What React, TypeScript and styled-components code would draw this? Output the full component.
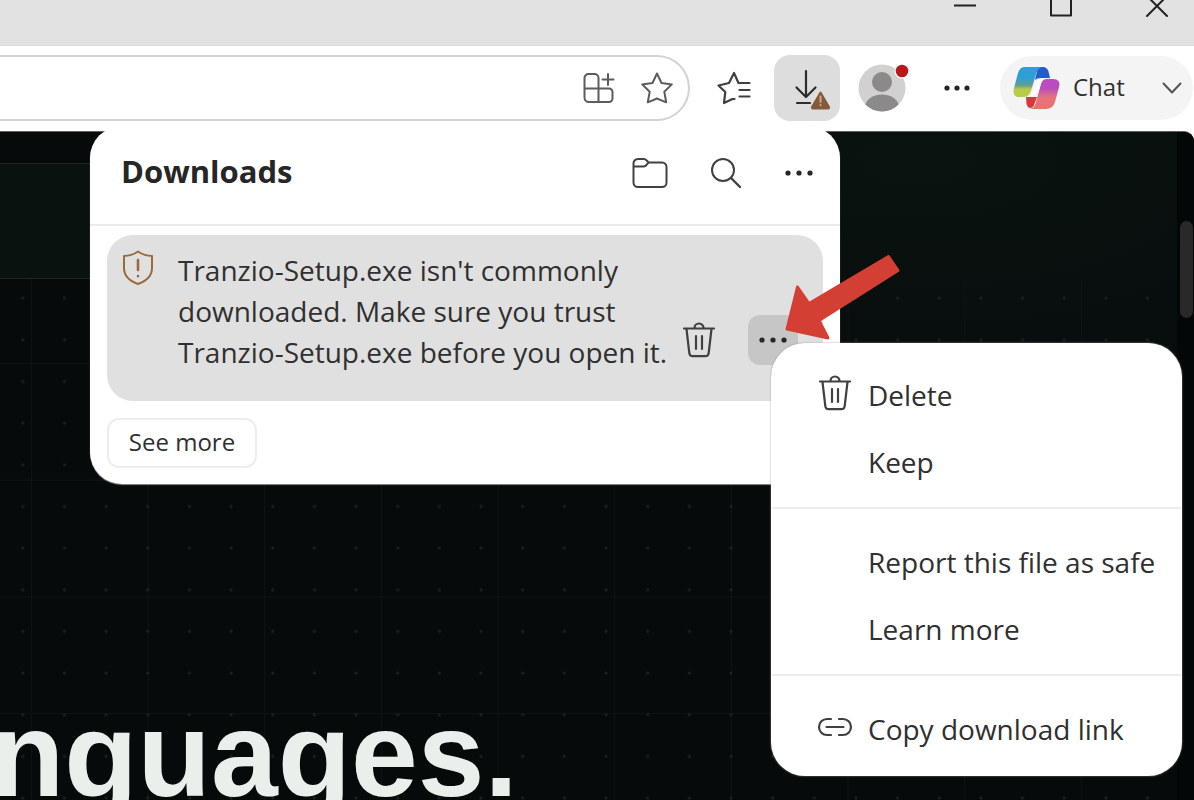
import React from 'react';
import styled, { createGlobalStyle } from 'styled-components';

const GlobalStyle = createGlobalStyle`
  * { box-sizing: border-box; }
  html, body { margin: 0; height: 100%; overflow: hidden; }
  body { font-family: "Open Sans", "Noto Sans", sans-serif; color: #303030; background: #ffffff; }
  button { font: inherit; color: inherit; background: none; border: 0; padding: 0; }
  svg { display: block; flex: none; overflow: visible; }
`;

const Window = styled.div`
  position: relative;
  display: flex;
  flex-direction: column;
  height: 100vh;
  overflow: hidden;
`;

const TitleBar = styled.header`
  display: flex;
  flex: none;
  justify-content: flex-end;
  height: 46px;
  padding-right: 13px;
  background: #e2e2e2;
  border-bottom: 1px solid #dadada;
`;

const CaptionButton = styled.button`
  display: flex;
  justify-content: center;
  width: 48px;
  height: 18px;
  & + & { margin-left: 48px; }
`;

const Toolbar = styled.div`
  display: flex;
  flex: none;
  align-items: center;
  height: 85px;
  padding-bottom: 2px;
  background: #ffffff;
`;

const AddressBar = styled.div`
  position: relative;
  display: flex;
  flex: 1;
  align-items: center;
  gap: 24px;
  height: 66px;
  padding-right: 14px;
  border: 2px solid #d2d3d3;
  border-left: 0;
  border-radius: 0 33px 33px 0;
`;

const AddressInput = styled.input`
  flex: 1;
  min-width: 0;
  height: 40px;
  border: 0;
  outline: 0;
  background: transparent;
  font: inherit;
`;

const ToolButton = styled.button<{ $active?: boolean; $width?: number }>`
  position: relative;
  display: flex;
  align-items: center;
  justify-content: center;
  width: ${(p) => p.$width ?? 66}px;
  height: 66px;
  border-radius: 16px;
  background: ${(p) => (p.$active ? '#dddddd' : 'transparent')};
`;

const PlainIconButton = styled.button`
  display: flex;
  align-items: center;
  justify-content: center;
`;

const ToolGroup = styled.div`
  display: flex;
  flex: none;
  align-items: center;
  padding-left: 4px;
`;

const ChatButton = styled.button`
  display: flex;
  align-items: center;
  width: 193px;
  height: 64px;
  margin-left: 10px;
  margin-right: 1px;
  padding: 0 11px 0 12px;
  border-radius: 32px;
  background: #f4f4f4;
  font-size: 24px;
  line-height: 32px;
`;

const ChatLabel = styled.span`
  flex: 1;
  padding: 0 0 2px 13px;
  text-align: left;
`;

const Viewport = styled.main`
  position: relative;
  display: flex;
  flex: 1;
  min-height: 0;
  border-top: 1px solid #5c6161;
  border-top-right-radius: 10px;
  background: #060a0b;
  overflow: hidden;
`;

const Page = styled.div`
  flex: 1;
  min-width: 0;
  padding-top: 31px;
  background: radial-gradient(ellipse 600px 260px at 78% 4%, #09130f, #080d0d 80%, #060a0b);
`;

const SiteHeader = styled.div`
  width: 70%;
  height: 116px;
  border: solid #222524;
  border-width: 1px 0;
  background: #0a120f;
`;

const Hero = styled.section`
  height: 600px;
  padding-top: 405px;
  background-image:
    radial-gradient(circle, #1b2120 1px, transparent 2px),
    linear-gradient(to right, #0d1312 1px, transparent 1px),
    linear-gradient(#0d1312 1px, transparent 1px);
  background-size:
    calc(125px / 3) calc(125px / 3),
    calc(350px / 3) 100%,
    100% calc(350px / 3);
  background-position: 2px 40px, 31px 0, 0 84px;
`;

const HeroTitle = styled.h1`
  margin: 0 0 0 -9px;
  font-family: "Liberation Sans", Arial, sans-serif;
  font-size: 120px;
  line-height: 140px;
  font-weight: 700;
  color: #ebefec;
`;

const ScrollTrack = styled.div`
  flex: none;
  width: 17px;
  padding: 89px 1px 0 3px;
  background: #030707;
`;

const ScrollThumb = styled.div`
  height: 97px;
  border-radius: 7px;
  background: #2a2828;
`;

const DownloadsPanel = styled.section`
  position: absolute;
  top: 126px;
  right: 354px;
  width: 750px;
  border-radius: 32px;
  background: #ffffff;
  box-shadow: 0 1px 1px #8c8c8c;
`;

const PanelHeader = styled.div`
  display: flex;
  align-items: center;
  height: 100px;
  padding: 0 26px 4px 31px;
  border-bottom: 2px solid #ececec;
`;

const PanelTitle = styled.h2`
  flex: 1;
  margin: 0;
  padding-bottom: 4px;
  font-size: 31px;
  line-height: 40px;
  font-weight: 700;
  color: #262626;
`;

const PanelActions = styled.div`
  display: flex;
  align-items: center;
  gap: 42px;
`;

const PanelBody = styled.div`
  padding: 9px 17px 16px;
`;

const DownloadCard = styled.article`
  display: flex;
  height: 166px;
  padding: 15px 25px 16px 15px;
  border-radius: 26px;
  background: #e0e0e0;
`;

const Message = styled.p`
  flex: 1;
  margin: 0;
  padding-left: 24px;
  font-size: 28px;
  line-height: 41px;
  white-space: nowrap;
`;

const CardActions = styled.div`
  display: flex;
  align-items: center;
  gap: 33px;
  padding-top: 45px;
`;

const MoreButton = styled.button`
  display: flex;
  align-items: center;
  justify-content: center;
  width: 50px;
  height: 50px;
  border-radius: 12px;
  background: #c6c6c6;
`;

const SeeMoreButton = styled.button`
  width: 150px;
  height: 50px;
  margin-top: 17px;
  padding-bottom: 2px;
  border: 2px solid #ededed;
  border-radius: 12px;
  font-size: 24px;
  line-height: 32px;
`;

const Menu = styled.div`
  position: absolute;
  top: 343px;
  right: 12px;
  width: 411px;
  padding: 18px 1px 14px;
  border-radius: 34px;
  background: #ffffff;
  box-shadow: 0 0 2px #9a9a9a;
`;

const MenuItem = styled.button`
  display: flex;
  align-items: center;
  gap: 16px;
  width: 100%;
  height: 67px;
  padding-left: 46px;
  font-size: 28px;
  line-height: 38px;
`;

const MenuIcon = styled.span`
  display: flex;
  justify-content: center;
  width: 34px;
  padding-bottom: 4px;
`;

const MenuDivider = styled.hr`
  height: 2px;
  margin: 12px 0 19px;
  border: 0;
  background: #ececec;
`;

const Pointer = styled.svg`
  position: absolute;
  top: 250px;
  right: 290px;
`;

const ink = '#404040';
const line = { fill: 'none', stroke: ink, strokeWidth: 2, strokeLinecap: 'round', strokeLinejoin: 'round' } as const;

const Dots = ({ gap = 11 }: { gap?: number }) => (
  <svg width="30" height="30" viewBox="-15 -15 30 30" fill="#262626" aria-hidden="true">
    <circle cx={-gap} r="2.600" /><circle r="2.600" /><circle cx={gap} r="2.600" />
  </svg>
);

const Trash = () => (
  <svg width="32" height="36" viewBox="0 0 32 36" {...line} strokeWidth={2.2} aria-hidden="true">
    <path d="M1 6.500h30M11.500 6a4.500 4.500 0 0 1 9 0M3.500 7l2.800 24a3.500 3.500 0 0 0 3.500 3.200h12.400a3.500 3.500 0 0 0 3.500-3.200L28.500 7M13 14v13M19 14v13" />
  </svg>
);

const starPath = 'M17 2.500 21.500 12l10.300 1.400-7.500 7.300 1.900 10.600L17 27.500l-9.200 3.800 1.900-10.600-7.500-7.300L12.500 12Z';

export default function App() {
  return (
    <Window>
      <GlobalStyle />
      <TitleBar>
        <CaptionButton aria-label="Minimize">
          <svg width="22" height="18" viewBox="0 0 22 18" {...line}><path d="M0 5.500h22" stroke="#222" strokeLinecap="butt" /></svg>
        </CaptionButton>
        <CaptionButton aria-label="Maximize">
          <svg width="22" height="18" viewBox="0 0 22 18" {...line}><path d="M1-5h20v20.500H1Z" stroke="#222" /></svg>
        </CaptionButton>
        <CaptionButton aria-label="Close">
          <svg width="22" height="18" viewBox="0 0 22 18" {...line}><path d="m1-4 20 20M21-4 1 16" stroke="#222" /></svg>
        </CaptionButton>
      </TitleBar>

      <Toolbar>
        <AddressBar>
          <AddressInput aria-label="Address" />
          <PlainIconButton aria-label="Add to apps">
            <svg width="34" height="34" viewBox="0 0 34 34" {...line} stroke="#5c5c5c">
              <path d="M6.500 3h6a4 4 0 0 1 4 4v24H7a4.500 4.500 0 0 1-4.500-4.500V7a4 4 0 0 1 4-4ZM2.500 17.500H27a3.500 3.500 0 0 1 3.500 3.500v6.500A3.500 3.500 0 0 1 27 31H16.500M26 3v11M20.500 8.500h11" />
            </svg>
          </PlainIconButton>
          <PlainIconButton aria-label="Add to favorites">
            <svg width="34" height="34" viewBox="0 0 34 34" {...line} stroke="#5c5c5c"><path d={starPath} /></svg>
          </PlainIconButton>
        </AddressBar>
        <ToolGroup>
          <ToolButton aria-label="Favorites" $width={80}>
            <svg width="34" height="34" viewBox="0 0 34 34" {...line} strokeWidth={2.2}>
              <path d="M17.500 28 15.500 28 7 32 8.300 21 1.500 14.500 12 12 17 2 21.500 12M22.500 12h10M22.500 19h10M22.500 25.500h10" />
            </svg>
          </ToolButton>
          <ToolButton $active aria-label="Downloads">
            <svg width="38" height="38" viewBox="0 0 38 38" {...line} stroke="#2c2c2c">
              <path d="M18 2v25M8.500 18.500 18 28l9.500-9.500M9 34h13" strokeWidth="2.200" />
              <path d="M32.500 23.500 41 38a1 1 0 0 1-1 1.500H25a1 1 0 0 1-1-1.500Z" fill="#835a3c" stroke="#835a3c" />
              <path d="M32.500 27.500v5.500M32.500 36v.2" stroke="#d3a681" />
            </svg>
          </ToolButton>
          <ToolButton aria-label="Profile" $width={84}>
            <svg width="48" height="48" viewBox="0 0 48 48">
              <clipPath id="face"><circle cx="24" cy="24" r="23.500" /></clipPath>
              <circle cx="24" cy="24" r="23.500" fill="#d2d1cf" />
              <g clipPath="url(#face)" fill="#8b8989">
                <circle cx="24" cy="18" r="10" />
                <ellipse cx="24" cy="43" rx="17" ry="12.500" />
              </g>
              <circle cx="44" cy="7" r="7.500" fill="#fff" />
              <circle cx="44" cy="7" r="6.300" fill="#b9171a" />
            </svg>
          </ToolButton>
          <ToolButton aria-label="Settings and more">
            <Dots gap={10} />
          </ToolButton>
          <ChatButton>
            <svg width="48" height="44" viewBox="0 0 48 44" aria-hidden="true">
              <defs>
                <linearGradient id="cool" x1="0" y1="0" x2="0" y2="1">
                  <stop offset="0.350" stopColor="#2b9fd6" /><stop offset="0.620" stopColor="#649f93" /><stop offset="0.740" stopColor="#b9cc45" />
                </linearGradient>
                <linearGradient id="warm" x1="0" y1="0" x2="0" y2="1">
                  <stop offset="0.300" stopColor="#b94cbe" /><stop offset="0.600" stopColor="#e6717f" /><stop offset="1" stopColor="#e87469" />
                </linearGradient>
              </defs>
              <path d="M26 1h5q4 0 5.500 4.500L38 12H29q-4 0-6 2Z" fill="#265bcb" />
              <path d="M14 31h11l-3 8q-1 3-4 3-3-1-3.500-4Z" fill="#d23b3b" />
              <path d="M12 1H30q-4 1-5.500 5.500L19 25q-2 6-8 6H7Q0 31 2 22L6 7Q8 1 12 1Z" fill="url(#cool)" />
              <path d="M35 13H41Q49 13 47 21L43 36Q41 43 34 43H18q4-1 5.500-5.500L29 18Q30.500 13 35 13Z" fill="url(#warm)" />
              <path d="M25.500 13.500h6Q29.500 15 28.500 19l-3 10.500h-7q1.500-1.500 2.500-4.500Z" fill="#fafafa" />
            </svg>
            <ChatLabel>Chat</ChatLabel>
            <svg width="20" height="12" viewBox="0 0 20 12" {...line} stroke="#555"><path d="m1.500 1.500 8.500 9 8.500-9" /></svg>
          </ChatButton>
        </ToolGroup>
      </Toolbar>

      <Viewport>
        <Page>
          <SiteHeader />
          <Hero>
            <HeroTitle>nguages.</HeroTitle>
          </Hero>
        </Page>
        <ScrollTrack><ScrollThumb /></ScrollTrack>
      </Viewport>

      <DownloadsPanel aria-labelledby="downloads-title">
        <PanelHeader>
          <PanelTitle id="downloads-title">Downloads</PanelTitle>
          <PanelActions>
            <PlainIconButton aria-label="Open downloads folder">
              <svg width="36" height="32" viewBox="0 0 36 32" {...line}>
                <path d="M1.500 6.500a4.500 4.500 0 0 1 4.500-4.500h5.500q2 0 3.200 1.500L16.500 5.500H30A4.500 4.500 0 0 1 34.500 10v15.500A4.500 4.500 0 0 1 30 30H6a4.500 4.500 0 0 1-4.500-4.500ZM1.500 9.500H11q2 0 3.200-1.300L16.500 5.500" />
              </svg>
            </PlainIconButton>
            <PlainIconButton aria-label="Search downloads">
              <svg width="32" height="32" viewBox="0 0 32 32" {...line}>
                <circle cx="13" cy="13" r="11" /><path d="m21 21 9 9" strokeWidth="2.400" />
              </svg>
            </PlainIconButton>
            <PlainIconButton aria-label="More options"><Dots /></PlainIconButton>
          </PanelActions>
        </PanelHeader>
        <PanelBody>
          <DownloadCard>
            <svg width="32" height="36" viewBox="0 0 32 36" {...line} stroke="#9a6a3c" aria-hidden="true">
              <path d="M16 1.500Q22.500 6 30 6v12Q30 29 16 34 2 29 2 18V6Q9.500 6 16 1.500Z" />
              <path d="M16 10v10M16 26v.2" strokeWidth="2.600" />
            </svg>
            <Message>
              Tranzio-Setup.exe isn't commonly<br />
              downloaded. Make sure you trust<br />
              Tranzio-Setup.exe before you open it.
            </Message>
            <CardActions>
              <PlainIconButton aria-label="Delete download"><Trash /></PlainIconButton>
              <MoreButton aria-label="More actions"><Dots /></MoreButton>
            </CardActions>
          </DownloadCard>
          <SeeMoreButton>See more</SeeMoreButton>
        </PanelBody>
      </DownloadsPanel>

      <Menu role="menu">
        <MenuItem role="menuitem"><MenuIcon><Trash /></MenuIcon>Delete</MenuItem>
        <MenuItem role="menuitem"><MenuIcon />Keep</MenuItem>
        <MenuDivider />
        <MenuItem role="menuitem"><MenuIcon />Report this file as safe</MenuItem>
        <MenuItem role="menuitem"><MenuIcon />Learn more</MenuItem>
        <MenuDivider />
        <MenuItem role="menuitem">
          <MenuIcon>
            <svg width="34" height="20" viewBox="0 0 34 20" {...line} strokeWidth={2.2} aria-hidden="true">
              <path d="M13 2H9a8 8 0 0 0 0 16h4M21 2h4a8 8 0 0 1 0 16h-4M8.500 10h17" />
            </svg>
          </MenuIcon>
          Copy download link
        </MenuItem>
      </Menu>

      <Pointer width="120" height="94" viewBox="784 250 120 94" aria-hidden="true">
        <path d="M787 329 797.500 287 809 303.500 888.500 256.500 898 270.500 819 320.500 828 338Z" fill="#d43f33" stroke="#d43f33" strokeWidth="3" strokeLinejoin="round" />
      </Pointer>
    </Window>
  );
}
